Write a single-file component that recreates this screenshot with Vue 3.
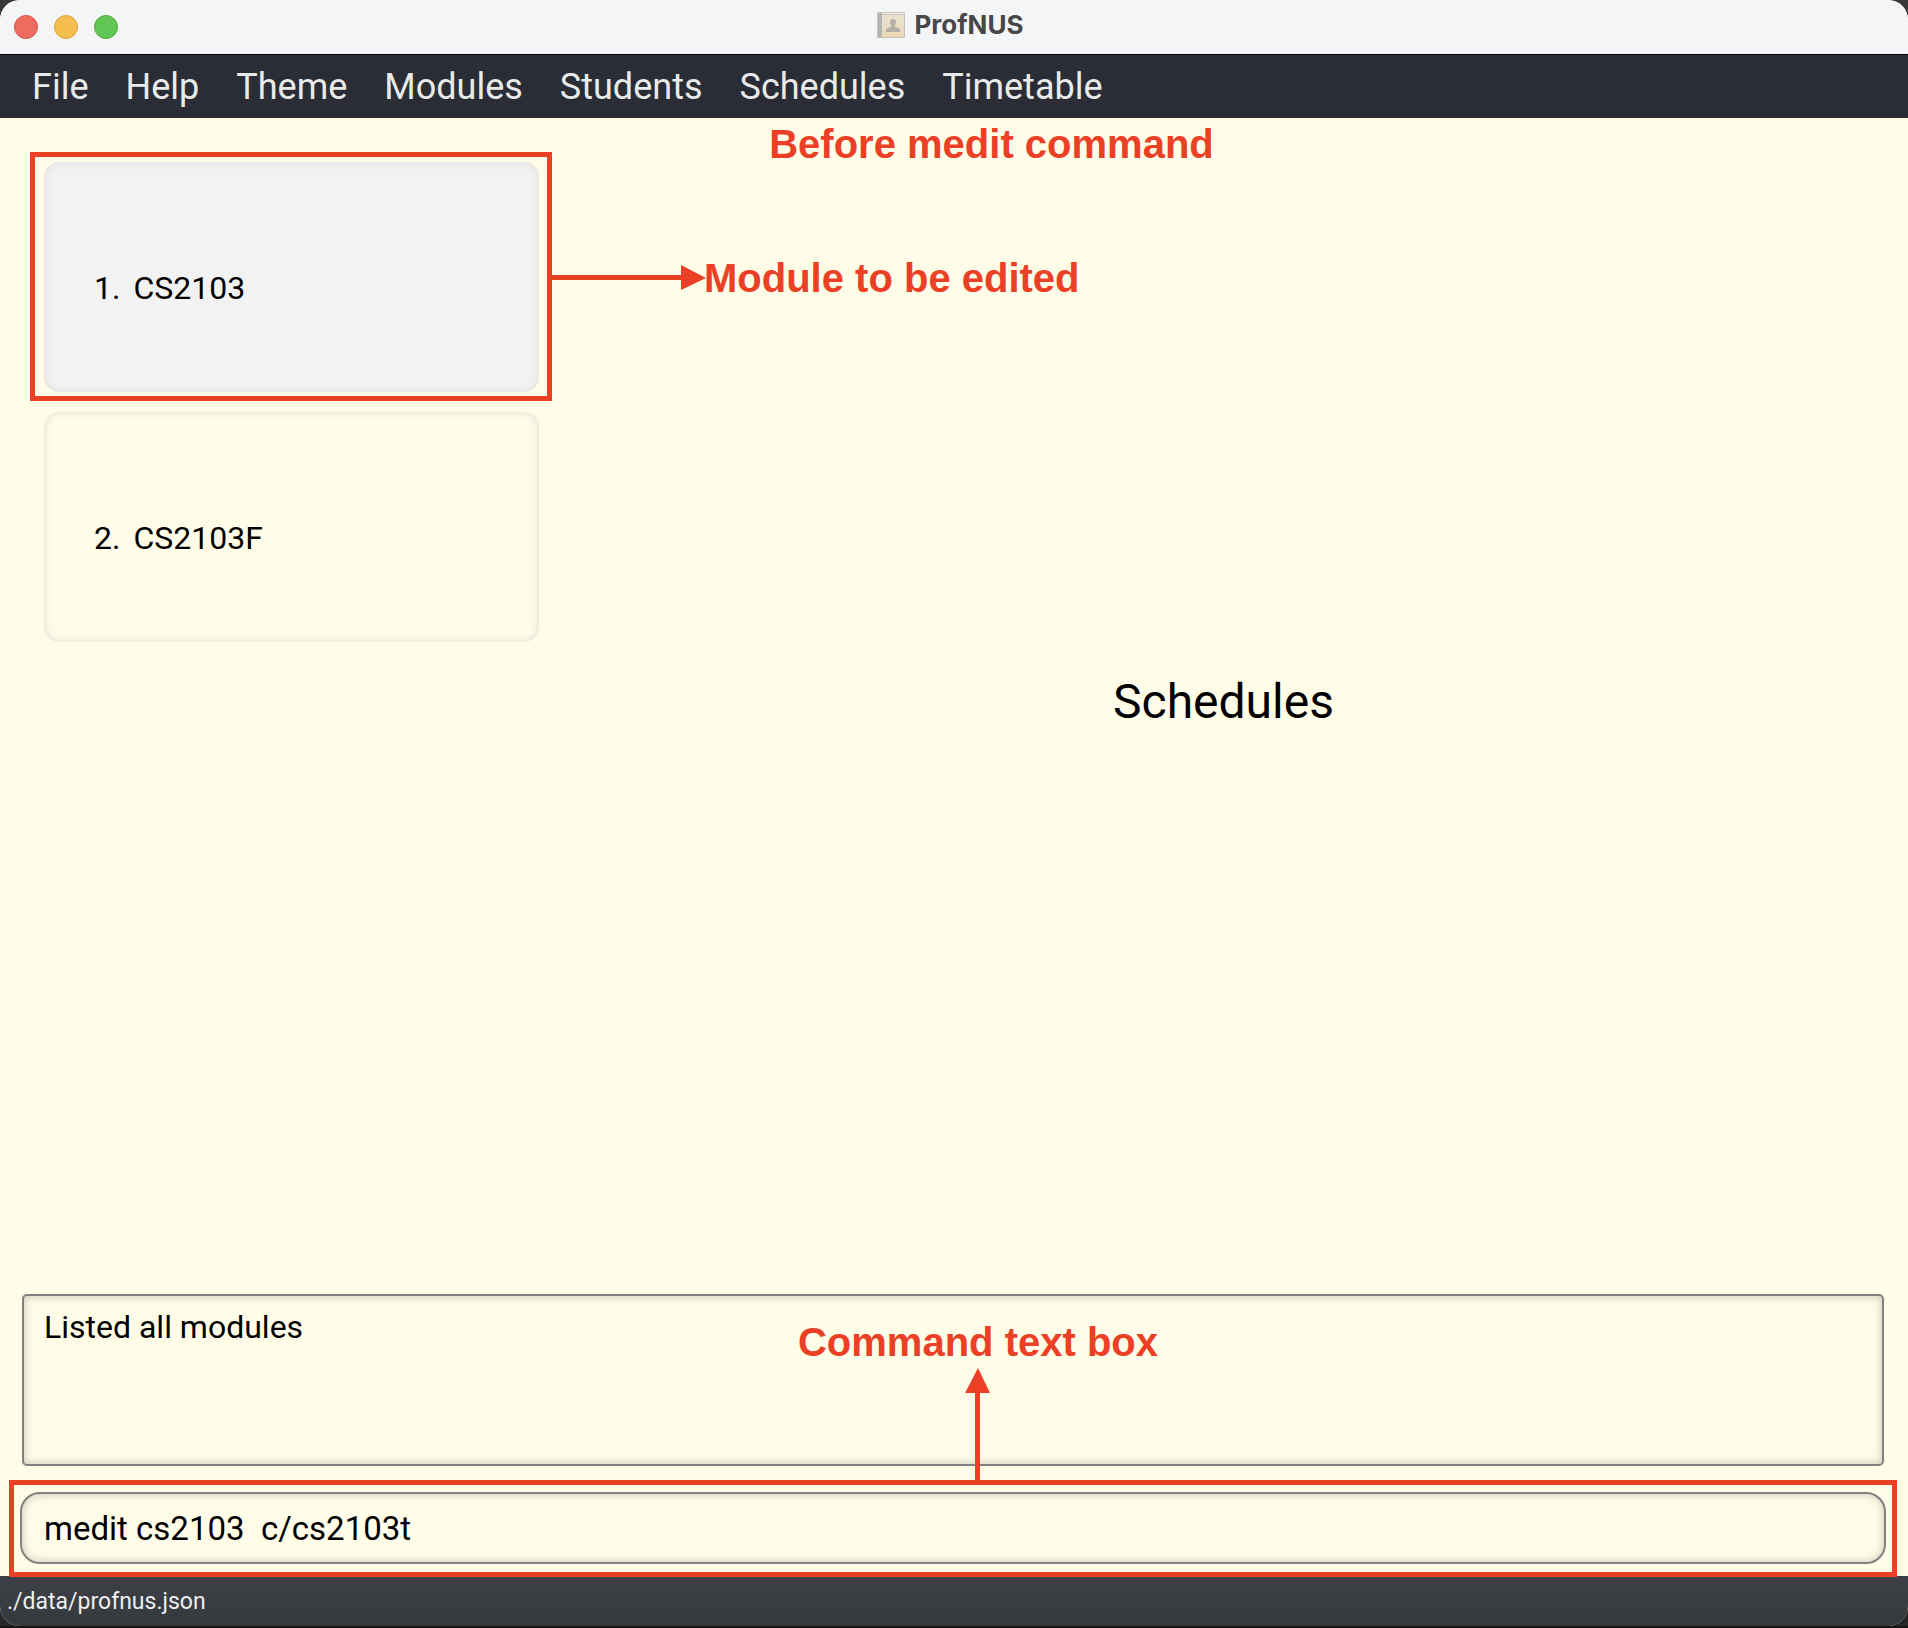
<script setup>
import { ref } from 'vue'

const menus = ['File', 'Help', 'Theme', 'Modules', 'Students', 'Schedules', 'Timetable']
const modules = [
  { code: 'CS2103', selected: true },
  { code: 'CS2103F', selected: false }
]
const result = ref('Listed all modules')
const command = ref('medit cs2103  c/cs2103t')
</script>

<template>
  <div class="window">
    <header class="titlebar">
      <div class="lights">
        <button class="light close" type="button" aria-label="Close"></button>
        <button class="light minimise" type="button" aria-label="Minimise"></button>
        <button class="light zoom" type="button" aria-label="Zoom"></button>
      </div>
      <h1 class="title">
        <svg class="app-icon" viewBox="0 0 28 27" aria-hidden="true">
          <defs>
            <linearGradient id="cover" x1="0" y1="0" x2="0" y2="1">
              <stop offset="0" stop-color="#e9e2d3" />
              <stop offset="1" stop-color="#ecd9b2" />
            </linearGradient>
          </defs>
          <rect x="0" y="0" width="28" height="26" rx="1" fill="#c9c3b8" />
          <rect x="1" y="1" width="4" height="24" fill="#b5b3b3" />
          <rect x="5" y="3" width="22" height="22" fill="url(#cover)" />
          <rect x="5" y="1" width="22" height="1" fill="#f3f0e8" />
          <path d="M16 7c2 0 3 1.200 3 3 0 1.600-.7 2.600-1.300 3.400v1.400c1.800 1 5.300 1.200 5.300 3.600V20H9v-1.600c0-2.400 3.500-2.600 5.300-3.600v-1.400C13.700 12.600 13 11.600 13 10c0-1.800 1-3 3-3z" fill="#b3afa9" />
        </svg>
        <span>ProfNUS</span>
      </h1>
    </header>

    <nav class="menubar">
      <button v-for="m in menus" :key="m" class="menu" type="button">{{ m }}</button>
    </nav>

    <main class="content">
      <p class="note heading-note">Before medit command</p>
      <ol class="modules">
        <li v-for="(m, i) in modules" :key="m.code" class="card" :class="{ selected: m.selected }">
          <span>{{ i + 1 }}.</span>
          <span>{{ m.code }}</span>
          <div v-if="m.selected" class="frame card-frame">
            <div class="callout-right">
              <svg class="arrow-right" viewBox="0 0 159 26" aria-hidden="true">
                <path d="M0 10h134V0l25 13-25 12V15H0z" />
              </svg>
              <span class="note">Module to be edited</span>
            </div>
          </div>
        </li>
      </ol>
      <section class="schedules">
        <h2>Schedules</h2>
      </section>
    </main>

    <section class="console">
      <textarea v-model="result" class="result" readonly aria-label="Result"></textarea>
      <div class="command-row">
        <input id="command" v-model="command" class="command" type="text" autocomplete="off" spellcheck="false">
        <div class="frame command-frame">
          <div class="callout-up">
            <label class="note" for="command">Command text box</label>
            <svg class="arrow-up" viewBox="0 0 26 112" aria-hidden="true">
              <path d="M13 0l12 25H15v87h-5V25H0z" />
            </svg>
          </div>
        </div>
      </div>
    </section>

    <footer class="status">./data/profnus.json</footer>
  </div>
</template>

<style>
body {
  margin: 0;
  background: #373735;
}
</style>

<style scoped>
.window {
  box-sizing: border-box;
  display: flex;
  flex-direction: column;
  min-height: 100vh;
  border-bottom: 2px solid #161718;
  border-radius: 20px 20px 0 0;
  overflow: hidden;
  background: #fffde8;
  color: #000;
  font-family: Roboto, "Liberation Sans", sans-serif;
}

button {
  border: 0;
  padding: 0;
  background: none;
  font: inherit;
  color: inherit;
}

.titlebar {
  display: grid;
  grid-template-columns: 1fr auto 1fr;
  align-items: center;
  height: 54px;
  padding: 0 22px 0 14px;
  border-bottom: 1px solid #05080d;
  background: #f4f5f7;
}

.lights {
  display: flex;
  gap: 16px;
}

.light {
  box-sizing: border-box;
  width: 24px;
  height: 24px;
  border: 1px solid;
  border-radius: 50%;
}

.close {
  border-color: #d65348;
  background: #ed6b5f;
}

.minimise {
  border-color: #d9a23c;
  background: #f5bf4f;
}

.zoom {
  border-color: #4fa73d;
  background: #62c655;
}

.title {
  display: flex;
  align-items: center;
  gap: 10px;
  margin: 0;
  padding-bottom: 4px;
  font: bold 26px/32px Inter, sans-serif;
  color: #474747;
}

.app-icon {
  width: 28px;
  height: 27px;
}

.menubar {
  display: flex;
  gap: 37px;
  padding: 10px 32px 9px;
  background: #2a2d35;
  color: #e9eaea;
  font-size: 36px;
  line-height: 44px;
}

.content {
  position: relative;
  flex: 1;
  display: grid;
  grid-template-columns: 559fr 1329fr;
  padding: 44px 20px 0 0;
}

.modules {
  display: flex;
  flex-direction: column;
  gap: 20px;
  margin: 0;
  padding: 0 20px 0 44px;
  list-style: none;
}

.card {
  position: relative;
  box-sizing: border-box;
  display: flex;
  align-items: center;
  gap: 13px;
  height: 230px;
  padding: 21px 50px 0;
  border-radius: 15px;
  box-shadow: inset 0 0 8px #dcdbd6;
  font-size: 32px;
  line-height: 40px;
}

.selected {
  background: #f2f2f2;
}

.frame {
  position: absolute;
  border: 5px solid #eb4025;
  pointer-events: none;
}

.card-frame {
  inset: -10px -13px -9px -14px;
}

.note {
  margin: 0;
  color: #eb4025;
  font: bold 40px/48px "Liberation Sans", sans-serif;
  white-space: nowrap;
}

.heading-note {
  position: absolute;
  top: 2px;
  left: 0;
  right: 0;
  padding-left: 75px;
  text-align: center;
}

.callout-right {
  position: absolute;
  top: 97px;
  left: 100%;
  display: flex;
  align-items: center;
}

.arrow-right {
  width: 159px;
  height: 26px;
  margin-right: -2px;
  fill: #eb4025;
}

.schedules {
  display: flex;
  align-items: center;
  justify-content: center;
  padding-bottom: 52px;
}

.schedules h2 {
  margin: 0;
  font-size: 48px;
  line-height: 60px;
  font-weight: 400;
}

.console {
  display: flex;
  flex-direction: column;
  gap: 26px;
  padding: 0 22px 12px 20px;
}

.result,
.command {
  box-sizing: border-box;
  display: block;
  border: 2px solid #808080;
  outline: 0;
  background: transparent;
  box-shadow: inset 0 0 10px #c6c5b6;
  color: inherit;
  font: 32px/40px Roboto, "Liberation Sans", sans-serif;
}

.result {
  height: 172px;
  margin: 0 2px;
  padding: 11px 20px;
  border-radius: 5px;
  resize: none;
}

.command-row {
  position: relative;
}

.command {
  width: 100%;
  height: 72px;
  padding: 0 22px;
  border-radius: 20px;
  font-size: 33px;
}

.command-frame {
  inset: -12px -11px -13px;
}

.callout-up {
  position: absolute;
  bottom: 100%;
  left: 0;
  right: 0;
  display: flex;
  flex-direction: column;
  align-items: center;
  gap: 2px;
  padding: 0 0 5px 50px;
}

.arrow-up {
  width: 26px;
  height: 112px;
  fill: #eb4025;
}

.status {
  padding: 10px 7px 8px;
  border-radius: 0 0 20px 20px;
  background: linear-gradient(#3d4047, #35393c);
  box-shadow: 0 20px 0 #252628;
  color: #eeeeee;
  font-size: 23px;
  line-height: 32px;
}
</style>
